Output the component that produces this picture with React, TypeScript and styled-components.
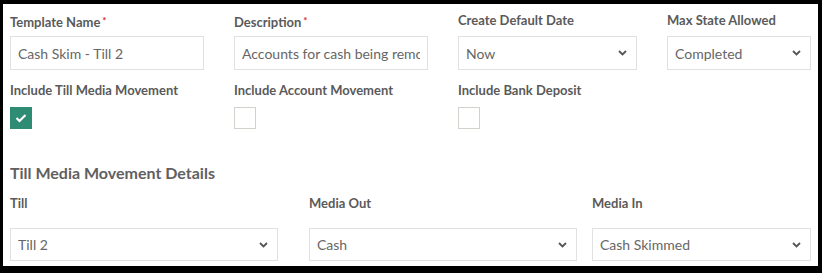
import React from 'react';
import styled, { createGlobalStyle } from 'styled-components';

const GlobalStyle = createGlobalStyle`
  html, body {
    margin: 0;
    padding: 0;
    background: #000;
  }
  * {
    box-sizing: border-box;
  }
`;

const Panel = styled.div`
  margin: 4px 4px 0 3px;
  height: 262px;
  background: #fff;
  padding: 7px 0 0 7px;
  font-family: Lato, "Open Sans", sans-serif;
  color: #555;
`;

const Grid = styled.div`
  display: grid;
  grid-template-columns: 194px 194px 179px 144px;
  column-gap: 30px;
`;

const DetailRow = styled.div`
  display: flex;
  margin-top: 0;
`;

const Field = styled.div<{ $w?: number; $ml?: number }>`
  display: flex;
  flex-direction: column;
  width: ${(p) => (p.$w ? `${p.$w}px` : 'auto')};
  margin-left: ${(p) => p.$ml ?? 0}px;
`;

const Label = styled.label<{ $mb?: number }>`
  font-size: 13px;
  font-weight: 700;
  line-height: 18px;
  height: 18px;
  color: #5a5a5a;
  white-space: nowrap;
  margin-bottom: ${(p) => p.$mb ?? 7}px;
`;

const Req = styled.span`
  color: #e0262b;
  font-size: 10px;
  vertical-align: 3px;
  margin-left: 2px;
`;

const TextInput = styled.input`
  height: 34px;
  width: 100%;
  border: 1px solid #e1e1e1;
  padding: 0 7px;
  font-family: inherit;
  font-size: 14px;
  color: #666;
  background: #fff;
  outline: none;
  margin: 0;
`;

const SelectBox = styled.div<{ $h?: number }>`
  height: ${(p) => p.$h ?? 34}px;
  border: 1px solid #e1e1e1;
  padding: 0 9px 0 7px;
  display: flex;
  align-items: center;
  justify-content: space-between;
  font-size: 14px;
  color: #666;
  white-space: nowrap;
`;

const CheckRow = styled(Grid)`
  margin-top: 11px;
`;

const Box = styled.span<{ $on?: boolean }>`
  width: 22px;
  height: 22px;
  display: flex;
  align-items: center;
  justify-content: center;
  background: ${(p) => (p.$on ? '#2e8b74' : '#fff')};
  border: 1px solid ${(p) => (p.$on ? '#2e8b74' : '#d4d0cc')};
`;

const Heading = styled.h3`
  margin: 33px 0 10px;
  font-size: 16px;
  font-weight: 700;
  line-height: 22px;
  color: #606060;
`;

const Chevron = () => (
  <svg width="9" height="6" viewBox="0 0 9 6">
    <path d="M1 1 L4.5 4.5 L8 1" fill="none" stroke="#555" strokeWidth="1.8" />
  </svg>
);

const Tick = () => (
  <svg width="12" height="10" viewBox="0 0 12 10">
    <path d="M1.5 5 L4.5 8 L10.5 2" fill="none" stroke="#fff" strokeWidth="2.2" />
  </svg>
);

const Select = ({ value, h }: { value: string; h?: number }) => (
  <SelectBox $h={h}>
    <span>{value}</span>
    <Chevron />
  </SelectBox>
);

export default function App() {
  return (
    <>
      <GlobalStyle />
      <Panel>
        <Grid>
          <Field>
            <Label>Template Name<Req>*</Req></Label>
            <TextInput readOnly value="Cash Skim - Till 2" />
          </Field>
          <Field>
            <Label>Description<Req>*</Req></Label>
            <TextInput readOnly value="Accounts for cash being removed from the till" />
          </Field>
          <Field>
            <Label>Create Default Date</Label>
            <Select value="Now" />
          </Field>
          <Field>
            <Label>Max State Allowed</Label>
            <Select value="Completed" />
          </Field>
        </Grid>

        <CheckRow>
          <Field>
            <Label $mb={8}>Include Till Media Movement</Label>
            <Box $on><Tick /></Box>
          </Field>
          <Field>
            <Label $mb={8}>Include Account Movement</Label>
            <Box />
          </Field>
          <Field>
            <Label $mb={8}>Include Bank Deposit</Label>
            <Box />
          </Field>
        </CheckRow>

        <Heading>Till Media Movement Details</Heading>

        <DetailRow>
          <Field $w={268}>
            <Label $mb={16}>Till</Label>
            <Select value="Till 2" h={33} />
          </Field>
          <Field $w={268} $ml={31}>
            <Label $mb={16}>Media Out</Label>
            <Select value="Cash" h={33} />
          </Field>
          <Field $w={219} $ml={15}>
            <Label $mb={16}>Media In</Label>
            <Select value="Cash Skimmed" h={33} />
          </Field>
        </DetailRow>
      </Panel>
    </>
  );
}
